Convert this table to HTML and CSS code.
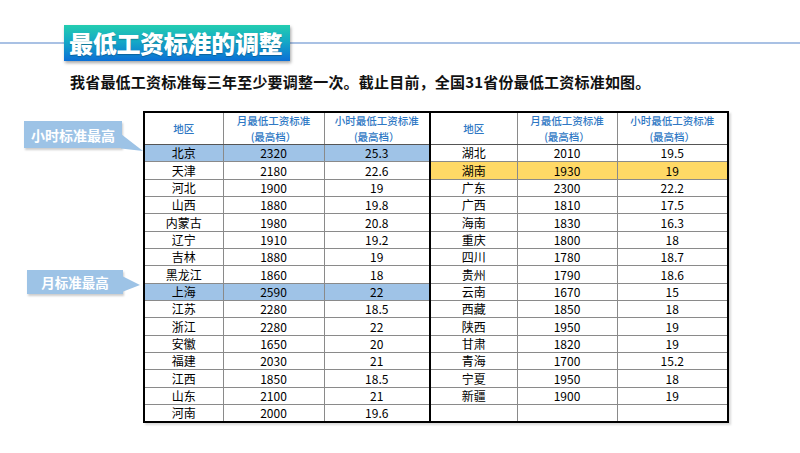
FILE: index.html
```html
<!DOCTYPE html>
<html lang="zh">
<head>
<meta charset="utf-8">
<title>最低工资标准的调整</title>
<link rel="stylesheet" href="styles.css">
</head>
<body>
<div class="slide">
  <header class="head">
    <h1 class="title">最低工资标准的调整</h1>
  </header>
  <p class="lead">我省最低工资标准每三年至少要调整一次。截止目前，全国31省份最低工资标准如图。</p>
  <div class="stage">
    <div class="callout callout-hour">小时标准最高</div>
    <div class="callout callout-month">月标准最高</div>
    <table class="wage">
      <colgroup>
        <col class="c1"><col class="c2"><col class="c3"><col class="c4"><col class="c5"><col class="c6">
      </colgroup>
      <thead>
        <tr>
          <th>地区</th><th>月最低工资标准<br>(最高档）</th><th>小时最低工资标准<br>(最高档）</th>
          <th class="split">地区</th><th>月最低工资标准<br>(最高档）</th><th>小时最低工资标准<br>(最高档）</th>
        </tr>
      </thead>
      <tbody>
        <tr><td class="hl">北京</td><td class="hl">2320</td><td class="hl">25.3</td><td class="split">湖北</td><td>2010</td><td>19.5</td></tr>
        <tr><td>天津</td><td>2180</td><td>22.6</td><td class="split yl">湖南</td><td class="yl">1930</td><td class="yl">19</td></tr>
        <tr><td>河北</td><td>1900</td><td>19</td><td class="split">广东</td><td>2300</td><td>22.2</td></tr>
        <tr><td>山西</td><td>1880</td><td>19.8</td><td class="split">广西</td><td>1810</td><td>17.5</td></tr>
        <tr><td>内蒙古</td><td>1980</td><td>20.8</td><td class="split">海南</td><td>1830</td><td>16.3</td></tr>
        <tr><td>辽宁</td><td>1910</td><td>19.2</td><td class="split">重庆</td><td>1800</td><td>18</td></tr>
        <tr><td>吉林</td><td>1880</td><td>19</td><td class="split">四川</td><td>1780</td><td>18.7</td></tr>
        <tr><td>黑龙江</td><td>1860</td><td>18</td><td class="split">贵州</td><td>1790</td><td>18.6</td></tr>
        <tr><td class="hl">上海</td><td class="hl">2590</td><td class="hl">22</td><td class="split">云南</td><td>1670</td><td>15</td></tr>
        <tr><td>江苏</td><td>2280</td><td>18.5</td><td class="split">西藏</td><td>1850</td><td>18</td></tr>
        <tr><td>浙江</td><td>2280</td><td>22</td><td class="split">陕西</td><td>1950</td><td>19</td></tr>
        <tr><td>安徽</td><td>1650</td><td>20</td><td class="split">甘肃</td><td>1820</td><td>19</td></tr>
        <tr><td>福建</td><td>2030</td><td>21</td><td class="split">青海</td><td>1700</td><td>15.2</td></tr>
        <tr><td>江西</td><td>1850</td><td>18.5</td><td class="split">宁夏</td><td>1950</td><td>18</td></tr>
        <tr><td>山东</td><td>2100</td><td>21</td><td class="split">新疆</td><td>1900</td><td>19</td></tr>
        <tr><td>河南</td><td>2000</td><td>19.6</td><td class="split"></td><td></td><td></td></tr>
      </tbody>
    </table>
  </div>
</div>
</body>
</html>
```

FILE: styles.css
```css
* { box-sizing: border-box; }
html, body { margin: 0; padding: 0; background: #fff; }
body {
  font-family: "Noto Sans CJK SC", "Noto Sans", sans-serif;
  color: #000;
}
.slide {
  width: 800px;
  height: 453px;
  overflow: hidden;
  display: flex;
  flex-direction: column;
}
.head {
  padding: 25px 0 0 64px;
  background: linear-gradient(#a9c1e4, #a9c1e4) no-repeat 0 42px / 100% 2px;
}
.title {
  display: inline-block;
  margin: 0;
  width: 226px;
  height: 36px;
  line-height: 36px;
  padding-left: 5px;
  font-size: 24px;
  font-weight: 900;
  color: #fff;
  letter-spacing: -0.3px;
  background: linear-gradient(180deg, #23cdb0 0%, #15a9c6 45%, #0b6fd6 100%);
  box-shadow: 1px 2px 3px rgba(0,0,0,0.35);
  text-shadow: 0 1px 1px rgba(0,0,0,0.25);
}
.lead {
  margin: 11px 0 0 70px;
  height: 20px;
  line-height: 20px;
  font-size: 15px;
  font-weight: 700;
  color: #111;
  letter-spacing: 0.2px;
}
.stage {
  position: relative;
  margin-top: 19px;
  padding-left: 143px;
}
.wage {
  border-collapse: collapse;
  table-layout: fixed;
  width: 584px;
  border: 2px solid #000;
  box-shadow: 2px 2px 2px rgba(0,0,0,0.15);
}
.c1 { width: 79px; }
.c2 { width: 101px; }
.c3 { width: 106px; }
.c4 { width: 87px; }
.c5 { width: 100px; }
.c6 { width: 111px; }
.wage th, .wage td {
  border: 1px solid #8a8a8a;
  text-align: center;
  padding: 0;
  white-space: nowrap;
}
.wage th {
  height: 31px;
  font-size: 10.5px;
  font-weight: 500;
  line-height: 15.5px;
  color: #2f78c4;
  border-bottom: 1px solid #555;
}
.wage td {
  height: 17.35px;
  font-size: 12px;
  line-height: 14px;
}
.wage .split { border-left: 2px solid #000; }
.wage .hl { background: #9fc3e7; }
.wage .yl { background: #ffd966; }
.callout {
  position: absolute;
  color: #fff;
  font-weight: 700;
  background: #9dc3e6;
  box-shadow: 1px 2px 2px rgba(0,0,0,0.2);
  display: flex;
  align-items: center;
  justify-content: center;
}
.callout::after {
  content: "";
  position: absolute;
  background: #9dc3e6;
}
.callout-hour {
  left: 24px;
  top: 10px;
  width: 98px;
  height: 27px;
  font-size: 14px;
}
.callout-hour::after {
  left: 97px;
  top: 13px;
  width: 22px;
  height: 17px;
  clip-path: polygon(0 0, 100% 100%, 0 85%);
}
.callout-month {
  left: 27px;
  top: 159px;
  width: 96px;
  height: 24px;
  font-size: 13.5px;
}
.callout-month::after {
  left: 95px;
  top: 6px;
  width: 18px;
  height: 16px;
  clip-path: polygon(0 0, 100% 56%, 0 100%);
}
```
